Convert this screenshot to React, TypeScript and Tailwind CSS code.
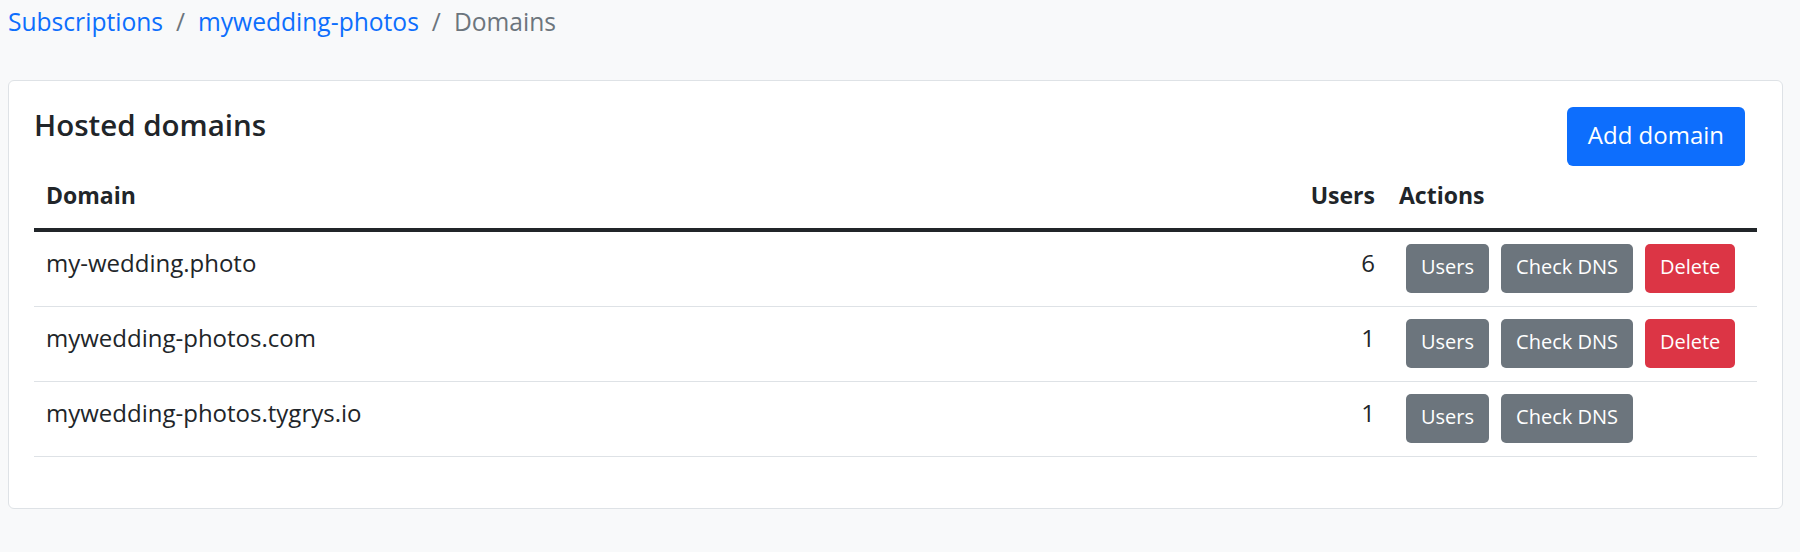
import React from 'react';

interface DomainRow {
    name: string;
    users: number;
    canDelete: boolean;
}

const domains: DomainRow[] = [
    { name: 'my-wedding.photo', users: 6, canDelete: true },
    { name: 'mywedding-photos.com', users: 1, canDelete: true },
    { name: 'mywedding-photos.tygrys.io', users: 1, canDelete: false },
];

function SmallButton({ label, danger = false }: { label: string; danger?: boolean }) {
    return (
        <button
            className={`inline-flex h-[49px] items-center rounded-[5px] px-[15px] pb-[4px] text-[20px] leading-[28px] text-white ${
                danger ? 'bg-[#dc3545]' : 'bg-[#6c757d]'
            }`}
        >
            {label}
        </button>
    );
}

export default function App() {
    return (
        <div className="min-h-screen bg-[#f8f9fa] pl-[8px] pr-[17px] pt-[3px] font-['Open_Sans','Noto_Sans',sans-serif] text-[24px] leading-[37px] text-[#212529]">
            {/* Breadcrumb */}
            <nav className="flex items-center text-[24.6px]">
                <a className="text-[#0d6efd]">Subscriptions</a>
                <span className="mx-[13px] text-[#6c757d]">/</span>
                <a className="text-[#0d6efd]">mywedding-photos</a>
                <span className="mx-[13px] text-[#6c757d]">/</span>
                <span className="text-[#6c757d]">Domains</span>
            </nav>

            {/* Card */}
            <div className="mt-[40px] rounded-[6px] border border-[#dee2e6] bg-white p-[25px] pb-[26px]">
                <div className="flex h-[60px] items-start justify-between">
                    <h5 className="text-[29.5px] font-semibold leading-[37px]">Hosted domains</h5>
                    <button className="mr-[12px] mt-[1px] inline-flex h-[59px] items-center rounded-[6px] bg-[#0d6efd] px-[21px] pb-[4px] text-[24px] leading-[33px] text-white">
                        Add domain
                    </button>
                </div>

                <div className="mb-[25px]">
                    <div className="grid h-[66px] grid-cols-[1fr_89px_370px] border-b-4 border-[#212529] text-[23px] font-bold">
                        <div className="px-[12px] pt-[11px]">Domain</div>
                        <div className="px-[12px] pt-[11px] text-right">Users</div>
                        <div className="px-[12px] pt-[11px]">Actions</div>
                    </div>
                    {domains.map((d) => (
                        <div
                            key={d.name}
                            className="grid h-[75px] grid-cols-[1fr_89px_370px] border-b border-[#dee2e6]"
                        >
                            <div className="px-[12px] pt-[12px]">{d.name}</div>
                            <div className="px-[12px] pt-[12px] text-right">{d.users}</div>
                            <div className="flex items-start gap-[12px] pl-[19px] pt-[12px]">
                                <SmallButton label="Users" />
                                <SmallButton label="Check DNS" />
                                {d.canDelete && <SmallButton label="Delete" danger />}
                            </div>
                        </div>
                    ))}
                </div>
            </div>
        </div>
    );
}
